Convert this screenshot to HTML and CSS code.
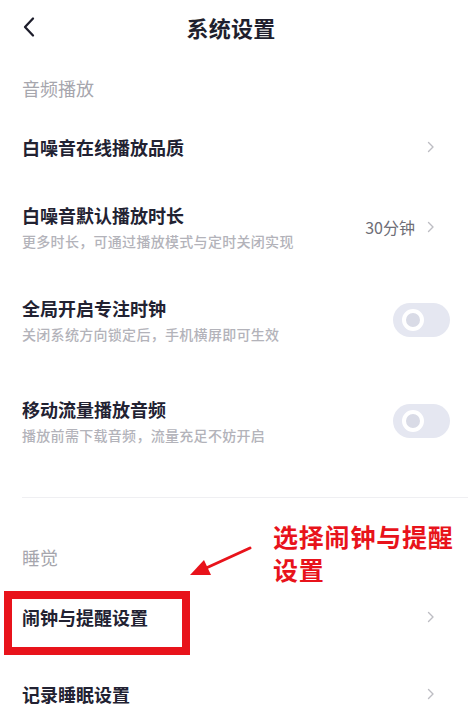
FILE: index.html
```html
<!DOCTYPE html>
<html lang="zh-CN">
<head>
<meta charset="utf-8">
<title>系统设置</title>
<link rel="stylesheet" href="styles.css">
</head>
<body>
<div class="page">
  <header class="topbar">
    <span class="back">
      <svg width="14" height="22" viewBox="0 0 14 22"><path d="M11 2.5 L3 11 L11 19.5" fill="none" stroke="#1d1d2b" stroke-width="2.3" stroke-linecap="round" stroke-linejoin="round"/></svg>
    </span>
    <h1 class="title">系统设置</h1>
    <span></span>
  </header>

  <div class="label label-first">音频播放</div>

  <div class="row row-1">
    <div class="text"><div class="name">白噪音在线播放品质</div></div>
    <span class="chev"><svg width="8" height="12" viewBox="0 0 8 12"><path d="M1.5 1.5 L6 6 L1.5 10.5" fill="none" stroke="#bdbdc3" stroke-width="1.4" stroke-linecap="round" stroke-linejoin="round"/></svg></span>
  </div>

  <div class="row row-2">
    <div class="text">
      <div class="name">白噪音默认播放时长</div>
      <div class="sub">更多时长，可通过播放模式与定时关闭实现</div>
    </div>
    <span class="value">30分钟</span>
    <span class="chev"><svg width="8" height="12" viewBox="0 0 8 12"><path d="M1.5 1.5 L6 6 L1.5 10.5" fill="none" stroke="#bdbdc3" stroke-width="1.4" stroke-linecap="round" stroke-linejoin="round"/></svg></span>
  </div>

  <div class="row row-3">
    <div class="text">
      <div class="name">全局开启专注时钟</div>
      <div class="sub">关闭系统方向锁定后，手机横屏即可生效</div>
    </div>
    <span class="toggle"><span class="knob"></span></span>
  </div>

  <div class="row row-4">
    <div class="text">
      <div class="name">移动流量播放音频</div>
      <div class="sub">播放前需下载音频，流量充足不妨开启</div>
    </div>
    <span class="toggle"><span class="knob"></span></span>
  </div>

  <div class="divider"></div>

  <div class="label label-second">睡觉</div>

  <div class="row row-5">
    <div class="text"><div class="name">闹钟与提醒设置</div></div>
    <span class="chev"><svg width="8" height="12" viewBox="0 0 8 12"><path d="M1.5 1.5 L6 6 L1.5 10.5" fill="none" stroke="#bdbdc3" stroke-width="1.4" stroke-linecap="round" stroke-linejoin="round"/></svg></span>
  </div>

  <div class="row row-6">
    <div class="text"><div class="name">记录睡眠设置</div></div>
    <span class="chev"><svg width="8" height="12" viewBox="0 0 8 12"><path d="M1.5 1.5 L6 6 L1.5 10.5" fill="none" stroke="#bdbdc3" stroke-width="1.4" stroke-linecap="round" stroke-linejoin="round"/></svg></span>
  </div>

  <div class="mark-box"></div>
  <svg class="mark-arrow" width="80" height="50" viewBox="0 0 80 50">
    <line x1="68" y1="10" x2="22" y2="31" stroke="#e8131b" stroke-width="3" stroke-linecap="round"/>
    <polygon points="8,37 22,22 29,37" fill="#e8131b"/>
  </svg>
  <div class="mark-text">选择闹钟与提醒<br>设置</div>
</div>
</body>
</html>
```

FILE: styles.css
```css
* { box-sizing: border-box; }
html, body { margin: 0; padding: 0; background: #ffffff; }
body {
  font-family: "Noto Sans CJK SC", "Noto Sans", "Liberation Sans", sans-serif;
  color: #1d1d2b;
}
.page {
  position: relative;
  width: 468px;
  height: 720px;
  overflow: hidden;
  background: #fff;
}
.topbar {
  height: 54px;
  display: grid;
  grid-template-columns: 1fr auto 1fr;
  align-items: center;
}
.back { display: flex; align-items: center; margin-left: 22px; }
.title {
  margin: 0;
  font-size: 22px;
  font-weight: 700;
  line-height: 30px;
  color: #1f1f2d;
  letter-spacing: 0.3px;
  transform: translateX(-3px);
}
.label {
  padding-left: 22px;
  font-size: 18px;
  line-height: 24px;
  color: #a6a6ad;
}
.label-first { padding-top: 22px; padding-bottom: 12px; }
.label-second { padding-top: 47px; padding-bottom: 13px; }
.row {
  display: flex;
  align-items: center;
  padding: 0 18px 0 22px;
}
.row-1 { height: 70px; }
.row-2 { height: 90px; }
.row-3 { height: 96px; }
.row-4 { height: 106px; }
.row-5 { height: 70px; }
.row-6 { height: 84px; }
.text { flex: 1; min-width: 0; }
.name {
  font-size: 18px;
  line-height: 24px;
  font-weight: 700;
  color: #222232;
}
.sub {
  margin-top: 4px;
  font-size: 14px;
  line-height: 20px;
  font-weight: 500;
  letter-spacing: 0.3px;
  color: #b3b3ba;
}
.value {
  font-size: 16px;
  color: #6e6e76;
  margin-right: 12px;
}
.chev {
  display: flex;
  align-items: center;
  margin-right: 15px;
}
.toggle {
  position: relative;
  width: 57px;
  height: 34px;
  border-radius: 17px;
  background: #e5e7f1;
  display: flex;
  align-items: center;
  padding-left: 9px;
}
.knob {
  width: 22px;
  height: 22px;
  border-radius: 50%;
  background: #d9dbe6;
  border: 4px solid #ffffff;
}
.divider {
  height: 1px;
  margin: 23px 0 0 22px;
  background: #efeff2;
}
.mark-box {
  position: absolute;
  left: 4px;
  top: 591px;
  width: 186px;
  height: 64px;
  border: 8px solid #e8131b;
}
.mark-arrow {
  position: absolute;
  left: 182px;
  top: 538px;
}
.mark-text {
  position: absolute;
  left: 273px;
  top: 520px;
  font-size: 25px;
  line-height: 33px;
  font-weight: 700;
  letter-spacing: 0.8px;
  color: #e8131b;
}
```
